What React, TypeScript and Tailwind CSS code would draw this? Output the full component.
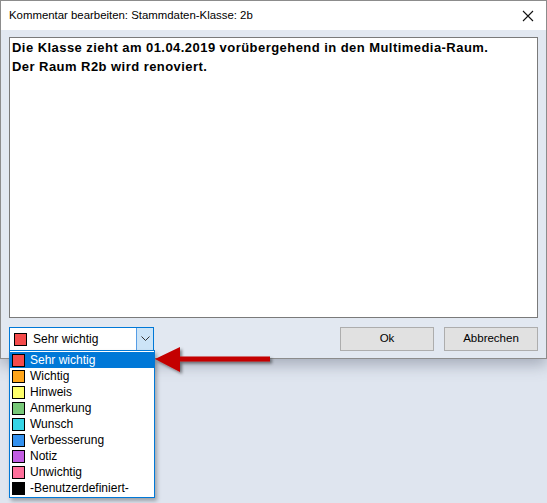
import React from "react";

const items = [
  { label: "Sehr wichtig", color: "bg-[#f44b4b]" },
  { label: "Wichtig", color: "bg-[#ffa51a]" },
  { label: "Hinweis", color: "bg-[#ffff6a]" },
  { label: "Anmerkung", color: "bg-[#78c878]" },
  { label: "Wunsch", color: "bg-[#36d5e6]" },
  { label: "Verbesserung", color: "bg-[#3391ef]" },
  { label: "Notiz", color: "bg-[#c25de2]" },
  { label: "Unwichtig", color: "bg-[#ff6f9b]" },
  { label: "-Benutzerdefiniert-", color: "bg-black" },
];

const uiFont = { fontFamily: '"Liberation Sans", Arial, sans-serif' };

const Swatch = ({ color }: { color: string }) => (
  <span className={`inline-block w-[13px] h-[13px] border border-black shrink-0 ${color}`} />
);

export default function App() {
  return (
    <div className="relative w-[547px] h-[503px] overflow-hidden bg-[#dfe5ef]" style={uiFont}>
      {/* dialog window */}
      <div className="w-[547px] h-[359px] border border-[#8c8c8c] bg-[#e2e8f1] flex flex-col shadow-[0_6px_14px_rgba(60,70,90,0.35)]">
        <div className="h-[29px] bg-white flex items-center justify-between pl-[8px] pr-[12px] shrink-0">
          <span className="text-[11.4px] text-black">Kommentar bearbeiten: Stammdaten-Klasse: 2b</span>
          <svg width="12" height="12" viewBox="0 0 12 12">
            <path d="M1 1 L11 11 M11 1 L1 11" stroke="#111" strokeWidth="1.1" />
          </svg>
        </div>

        <div className="flex-1 flex flex-col px-[8px] pt-[7px]">
          <div className="h-[281px] bg-white border border-[#7a7a7a] px-[2px] text-[13px] leading-[19px] font-bold tracking-[0.45px] text-black">
            <div>Die Klasse zieht am 01.04.2019 vorübergehend in den Multimedia-Raum.</div>
            <div>Der Raum R2b wird renoviert.</div>
          </div>

          <div className="flex items-start justify-between mt-[9px]">
            <div className="w-[145px] h-[24px] bg-white border border-[#0078d7] flex items-center">
              <div className="flex-1 flex items-center gap-[6px] pl-[4px]">
                <Swatch color="bg-[#f44b4b]" />
                <span className="text-[12px] text-black">Sehr wichtig</span>
              </div>
              <div className="w-[17px] h-[22px] bg-[#cce4f7] border-l border-[#569de5] flex items-center justify-center">
                <svg width="9" height="6" viewBox="0 0 9 6">
                  <path d="M0.5 0.5 L4.5 4.5 L8.5 0.5" stroke="#333" fill="none" strokeWidth="1" />
                </svg>
              </div>
            </div>

            <div className="flex gap-[10px]">
              <button className="w-[94px] h-[24px] bg-[#e1e1e1] border border-[#adadad] text-[11.5px] text-black">
                Ok
              </button>
              <button className="w-[94px] h-[24px] bg-[#e1e1e1] border border-[#adadad] text-[11.5px] text-black">
                Abbrechen
              </button>
            </div>
          </div>
        </div>
      </div>

      {/* open dropdown list */}
      <div className="absolute left-[9px] top-[350px] w-[146px] bg-white border border-[#0078d7] shadow-[2px_3px_4px_rgba(0,0,0,0.3)] py-[1px]">
        {items.map((item, i) => (
          <div
            key={item.label}
            className={`h-[16px] flex items-center gap-[5px] pl-[2px] text-[12px] ${
              i === 0 ? "bg-[#0078d7] text-white" : "text-black"
            }`}
          >
            <Swatch color={item.color} />
            <span>{item.label}</span>
          </div>
        ))}
      </div>

      {/* red arrow */}
      <svg className="absolute left-[150px] top-[343px]" width="130" height="36" viewBox="0 0 130 36">
        <defs>
          <filter id="sh" x="-10%" y="-30%" width="130%" height="180%">
            <feDropShadow dx="2" dy="2" stdDeviation="1.5" floodColor="#000" floodOpacity="0.45" />
          </filter>
        </defs>
        <path d="M5 16 L30 4 L30 13.5 L120 13.5 L120 18.5 L30 18.5 L30 29 Z" fill="#c40000" filter="url(#sh)" />
      </svg>
    </div>
  );
}
